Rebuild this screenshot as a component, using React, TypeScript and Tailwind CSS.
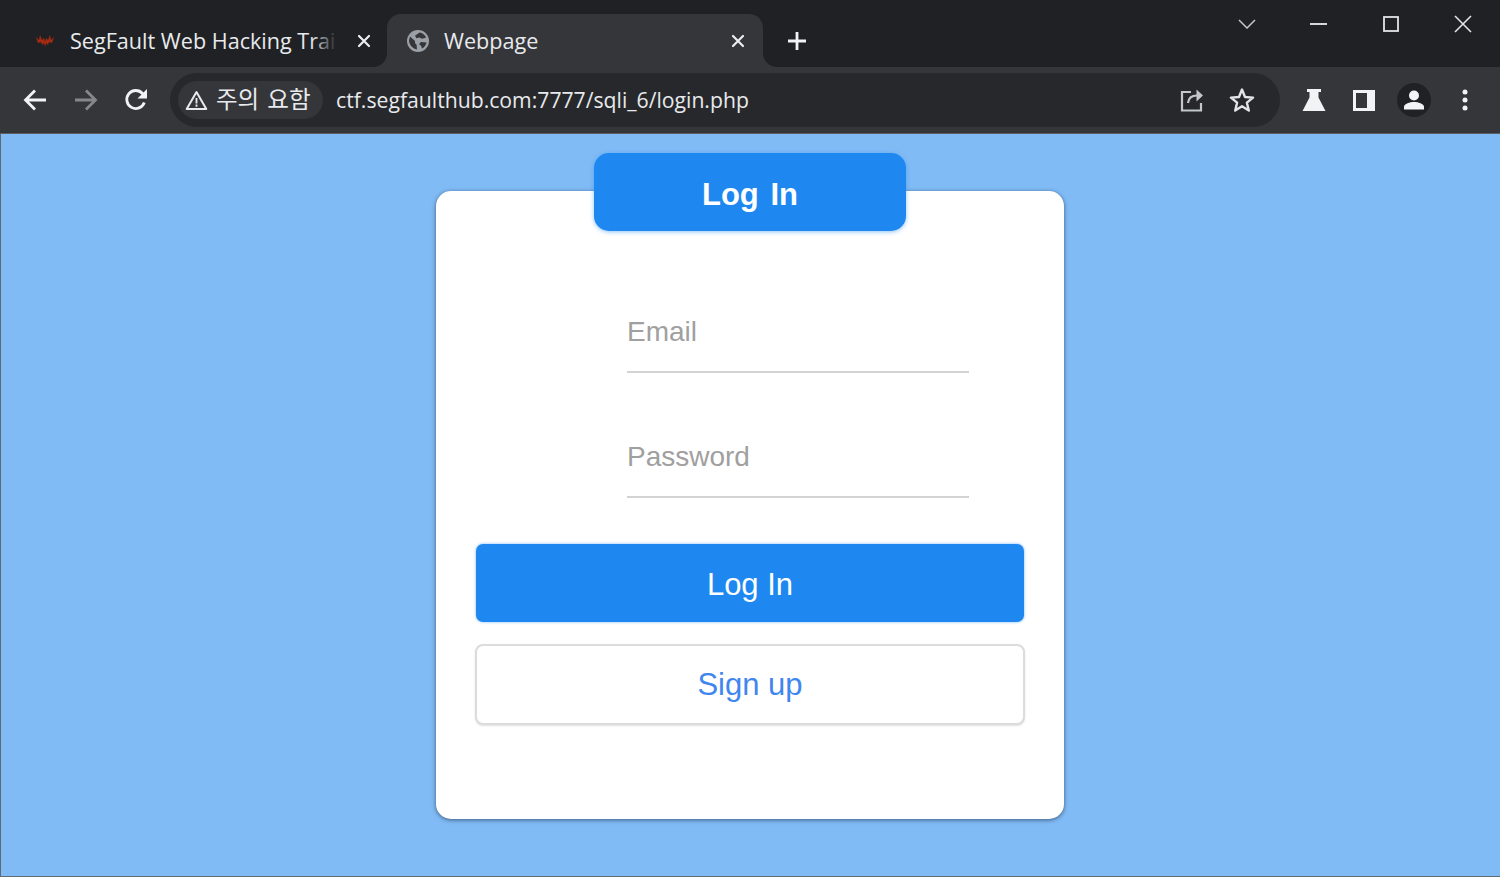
import { ReactNode } from "react"

function TabClose() {
  return (
    <svg width="14" height="14" viewBox="0 0 14 14" className="shrink-0" fill="none" stroke="#eceded" strokeWidth="2.2" strokeLinecap="round">
      <path d="M2 2 12 12M12 2 2 12" />
    </svg>
  )
}

function Globe() {
  return (
    <svg width="24" height="24" viewBox="0 0 24 24" className="shrink-0">
      <circle cx="12" cy="12" r="11" fill="#9aa0a6" />
      <path d="M4 7.5 9 12l0 1.6c0 1 1 1.4 1.6 2.2l.4 4.6C7 19.800 3.200 16 3 11.500ZM13.500 3.600c3 .4 5.500 2.400 6.700 5l-4 1.200-3-1.400-2.700.8-1.500-2.400ZM15 13l5.600.6c-.6 2.600-2.200 4.800-4.600 6l-.8-2.600-2.200-2Z" fill="#35363a" />
    </svg>
  )
}

function ToolCell({ children }: { children: ReactNode }) {
  return <div className="flex h-[50px] w-[50px] shrink-0 items-center justify-center">{children}</div>
}

function WindowCell({ children }: { children: ReactNode }) {
  return <div className="flex h-[48px] w-[72px] items-center justify-center">{children}</div>
}

function Browser() {
  return (
    <div className="shrink-0 [font-family:'Open_Sans','Noto_Sans_CJK_KR',sans-serif]">
      {/* tab strip */}
      <div className="flex h-[67px] items-start bg-[#202124]">
        <div className="flex h-full flex-1 items-end pl-[14px]">
          <div className="relative flex h-[53px] w-[373px] items-center pl-[22px] pr-[16px] text-[21.600px] text-[#e8eaed]">
            <svg width="18" height="14" viewBox="0 0 18 14" className="mr-[16px] shrink-0" fill="#a52a12">
              <path d="M0 3 3 6 4 1 6 6 8 4 9 8 10 4 12 6 14 1 15 6 18 3 16 9 13 8 12 11 10 9 9 13 8 9 6 11 5 8 2 9Z" />
            </svg>
            <span className="relative min-w-0 flex-1 whitespace-nowrap pt-px">
              SegFault Web Hacking Trai
              <span className="absolute right-[6px] top-0 h-full w-[26px] bg-gradient-to-r from-transparent to-[#202124]" />
            </span>
            <span className="ml-[14px] flex"><TabClose /></span>
          </div>
          <div className="relative flex h-[53px] w-[376px] items-center rounded-t-[14px] bg-[#35363a] pl-[19px] pr-[18px] text-[21.600px] text-[#e8eaed]">
            <span className="absolute bottom-0 left-[-14px] h-[14px] w-[14px] bg-[#35363a]">
              <span className="block h-full w-full rounded-br-[14px] bg-[#202124]" />
            </span>
            <span className="absolute bottom-0 right-[-14px] h-[14px] w-[14px] bg-[#35363a]">
              <span className="block h-full w-full rounded-bl-[14px] bg-[#202124]" />
            </span>
            <Globe />
            <span className="ml-[14px] flex-1 pt-px">Webpage</span>
            <TabClose />
          </div>
          <div className="flex h-[53px] w-[68px] items-center justify-center">
            <svg width="20" height="20" viewBox="0 0 20 20" stroke="#f1f3f4" strokeWidth="2.800">
              <path d="M10 1v18M1 10h18" />
            </svg>
          </div>
        </div>
        <div className="flex pr-px">
          <WindowCell>
            <svg width="18" height="10" viewBox="0 0 18 10" fill="none" stroke="#c4c6c9" strokeWidth="1.500"><path d="M1 1 9 9 17 1" /></svg>
          </WindowCell>
          <WindowCell>
            <svg width="17" height="2" viewBox="0 0 17 2" stroke="#d6d7d9" strokeWidth="2" className="-translate-x-px"><path d="M0 1h17" /></svg>
          </WindowCell>
          <WindowCell>
            <svg width="16" height="16" viewBox="0 0 16 16" fill="none" stroke="#e3e4e6" strokeWidth="1.800"><rect x="1" y="1" width="14" height="14" /></svg>
          </WindowCell>
          <WindowCell>
            <svg width="18" height="18" viewBox="0 0 18 18" stroke="#e3e4e6" strokeWidth="1.600"><path d="M1 1 17 17M17 1 1 17" /></svg>
          </WindowCell>
        </div>
      </div>

      {/* toolbar */}
      <div className="flex h-[67px] items-center border-b border-[#5b5d61] bg-[#35363a] pl-[11px] pb-[1px]">
        <ToolCell>
          <svg width="24" height="22" viewBox="0 0 24 22" fill="none" stroke="#f1f3f4" strokeWidth="2.800" className="-translate-x-[1px]">
            <path d="M23 11H3M12 1.500 2.500 11l9.500 9.500" />
          </svg>
        </ToolCell>
        <ToolCell>
          <svg width="24" height="22" viewBox="0 0 24 22" fill="none" stroke="#85878a" strokeWidth="2.800">
            <path d="M1 11h20M12 1.500 21.500 11 12 20.500" />
          </svg>
        </ToolCell>
        <ToolCell>
          <svg width="24" height="24" viewBox="0 0 24 24" fill="none">
            <path d="M20.300 14.500A9 9 0 1 1 18.500 5.500L21 8" stroke="#f1f3f4" strokeWidth="2.800" />
            <path d="M23 1v9.500h-9.500Z" fill="#f1f3f4" />
          </svg>
        </ToolCell>
        <div className="ml-[9px] flex h-[54px] w-[1110px] shrink-0 items-center rounded-full bg-[#27282b] pl-[8px]">
          <div className="flex h-[38px] w-[145px] shrink-0 items-center rounded-full bg-[#35363a] pl-[7px] text-[23.500px] text-[#e8eaed] [word-spacing:2px]">
            <svg width="23" height="20" viewBox="0 0 23 20" className="shrink-0" fill="none" stroke="#e8eaed" strokeWidth="2">
              <path d="M11.500 2 21.300 19H1.700Z" strokeLinejoin="round" />
              <path d="M11.500 8v5.500M11.500 14.500v2.200" strokeWidth="1.800" />
            </svg>
            <span className="ml-[8px] whitespace-nowrap">주의 요함</span>
          </div>
          <span className="ml-[13px] flex-1 whitespace-nowrap text-[21.200px] text-[#e8eaed]">ctf.segfaulthub.com:7777/sqli_6/login.php</span>
          <svg width="24" height="24" viewBox="0 0 24 24" className="translate-x-[1px] shrink-0" fill="none" stroke="#c4c7c9" strokeWidth="2.200">
            <path d="M11 4H2v18.500h19V15" />
            <path d="M8 15c.5-5 4-7.500 9-7.500" />
            <path d="M16.500 1.500 23 7.500 16.500 13.500Z" fill="#c4c7c9" stroke="none" />
          </svg>
          <svg width="26" height="25" viewBox="0 0 26 25" className="ml-[26px] mr-[25px] shrink-0" fill="none" stroke="#e3e4e6" strokeWidth="2.400" strokeLinejoin="round">
            <path d="M13 2.500 16 10l8 .6-6.100 5.100 1.900 7.800L13 19.300 6.200 23.500l1.900-7.800L2 10.600 10 10Z" />
          </svg>
        </div>
        <div className="ml-[9px] flex">
          <ToolCell>
            <svg width="24" height="24" viewBox="0 0 24 24" fill="#f1f3f4">
              <path d="M5 1h14v3h-2.500v5.500L23.500 23H.5L7.500 9.500V4H5Z" />
            </svg>
          </ToolCell>
          <ToolCell>
            <svg width="24" height="24" viewBox="0 0 24 24">
              <path d="M1 2h22v21H1Zm3 3v15h11V5Z" fill="#f1f3f4" fillRule="evenodd" />
            </svg>
          </ToolCell>
          <ToolCell>
            <div className="flex h-[34px] w-[34px] items-center justify-center rounded-full bg-[#202124]">
              <svg width="22" height="22" viewBox="0 0 22 22" fill="#f1f3f4">
                <circle cx="11" cy="6.500" r="5" />
                <path d="M1 20.500v-2.500c0-3.500 6-5 10-5s10 1.500 10 5v2.500Z" />
              </svg>
            </div>
          </ToolCell>
          <ToolCell>
            <svg width="6" height="22" viewBox="0 0 6 22" fill="#f1f3f4" className="translate-x-[1px]">
              <circle cx="3" cy="3" r="2.500" />
              <circle cx="3" cy="11" r="2.500" />
              <circle cx="3" cy="19" r="2.500" />
            </svg>
          </ToolCell>
        </div>
      </div>
    </div>
  )
}

export default function App() {
  return (
    <div className="flex h-[877px] w-[1500px] flex-col overflow-hidden bg-[#81bbf5] [font-family:'Liberation_Sans',Arial,sans-serif]">
      <Browser />
      <main className="flex flex-1 justify-center border-b border-l border-[#5f6a74] pr-px pt-[57px]">
        <div className="flex h-[628px] w-[628px] flex-col rounded-[15px] bg-white shadow-[0_1px_4px_rgba(30,50,80,0.7)]">
          <h1 className="mx-auto mt-[-38px] flex h-[78px] w-[312px] shrink-0 items-center justify-center rounded-[15px] bg-[#1e88f0] pt-[6px] text-[31px] font-bold text-white [word-spacing:3px] shadow-[0_1px_4px_rgba(30,136,240,0.5)]">
            Log In
          </h1>
          <form className="mt-[82px] flex flex-col">
            <input
              placeholder="Email"
              className="ml-[191px] h-[60px] w-[342px] border-b-2 border-[#d3d3d3] bg-transparent pb-[20px] text-[28px] outline-none placeholder:text-[#a0a0a0]"
            />
            <input
              placeholder="Password"
              className="ml-[191px] mt-[65px] h-[60px] w-[342px] border-b-2 border-[#d3d3d3] bg-transparent pb-[20px] text-[28px] outline-none placeholder:text-[#a0a0a0]"
            />
            <button
              type="button"
              className="mx-auto mt-[46px] h-[78px] w-[548px] rounded-[7px] bg-[#1e88f0] pt-[4px] text-[31px] text-white shadow-[0_0_3px_rgba(30,136,240,0.6)]"
            >
              Log In
            </button>
            <button
              type="button"
              className="mx-auto mt-[22px] h-[81px] w-[550px] rounded-[8px] border-2 border-[#dcdcdc] bg-white pt-[2px] text-[31px] text-[#3f87ee] shadow-[0_1px_2px_rgba(0,0,0,0.12)]"
            >
              Sign up
            </button>
          </form>
        </div>
      </main>
    </div>
  )
}
